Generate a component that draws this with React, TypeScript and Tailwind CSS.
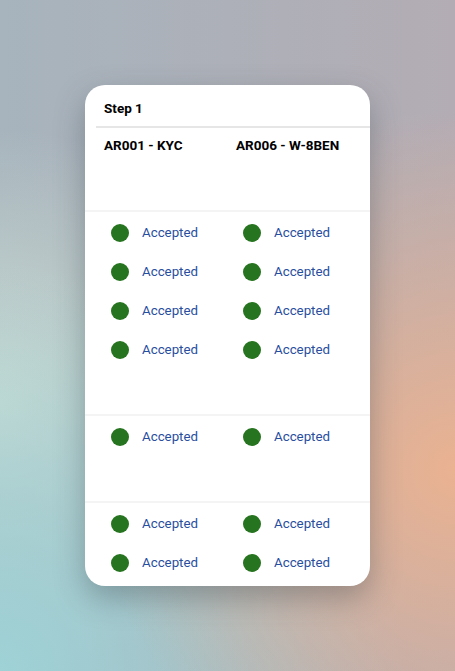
const groups = [
  { h: "h-[204px]", rows: 4 },
  { h: "h-[87px]", rows: 1 },
  { h: "h-[85px]", rows: 2 },
];

function Cell() {
  return (
    <div className="flex w-[132px] items-center pl-[7px]">
      <span className="h-[18px] w-[18px] shrink-0 rounded-full bg-[#26741f]" />
      <span className="ml-[13px] text-[13.3px] text-[#284ea0]">Accepted</span>
    </div>
  );
}

export default function App() {
  return (
    <div
      className="flex h-[671px] w-[455px] items-center justify-center bg-[radial-gradient(circle_at_100%_70%,#eab291_0%,rgba(234,178,145,0)_55%),radial-gradient(circle_at_0%_100%,#9ed2d6_0%,rgba(158,210,214,0)_50%),radial-gradient(circle_at_0%_60%,#cadbd3_0%,rgba(202,219,211,0)_45%),linear-gradient(90deg,#a7b4bd,#b3acb4)]"
      style={{ fontFamily: "Roboto, 'Liberation Sans', sans-serif" }}
    >
      <div className="h-[501px] w-[285px] overflow-hidden rounded-[20px] bg-white shadow-[0_12px_30px_rgba(50,60,70,0.35)]">
        <div className="h-[41px] pl-[19px] pt-[14px] text-[13.5px] leading-[18px] font-bold text-black">Step 1</div>
        <div className="ml-[11px] h-[2px] bg-[#e6e6e6]" />
        <div className="flex h-[82px] pl-[19px] pt-[8px] text-[13.5px] leading-[18px] font-bold text-black">
          <div className="w-[132px]">AR001 - KYC</div>
          <div>AR006 - W-8BEN</div>
        </div>
        {groups.map((g, i) => (
          <div key={i} className={`${g.h} border-t-2 border-[#f4f4f4] pl-[19px] pt-[1px]`}>
            {Array.from({ length: g.rows }).map((_, j) => (
              <div key={j} className="flex h-[39px] items-center">
                <Cell />
                <Cell />
              </div>
            ))}
          </div>
        ))}
      </div>
    </div>
  );
}
